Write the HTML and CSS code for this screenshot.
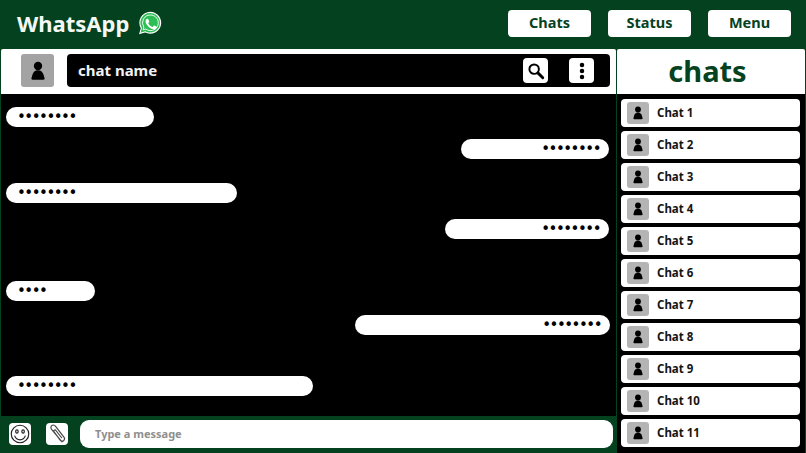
FILE: index.html
```html
<!DOCTYPE html>
<html lang="en">
<head>
<meta charset="utf-8">
<title>WhatsApp</title>
<link rel="stylesheet" href="styles.css">
</head>
<body>
<svg class="defs" width="0" height="0" aria-hidden="true">
  <symbol id="person" viewBox="0 0 24 24">
    <circle cx="12" cy="6" r="5"/>
    <path d="M12 11c-3.600 0-5.800 2.300-6.600 5.200L4.200 20.500c-.4 1.200.2 2 1.300 2h13c1.100 0 1.700-.8 1.300-2l-1.200-4.300C17.800 13.300 15.600 11 12 11z"/>
  </symbol>
</svg>
<header class="topbar">
  <div class="brand">
    <span class="brand-name">WhatsApp</span>
    <svg class="brand-logo" viewBox="0 0 24 24">
      <path class="logo-edge" d="M12.300 .8A11 11 0 0 0 2.800 17.300L1 23.200l6.200-1.600A11 11 0 1 0 12.300 .8z"/>
      <path class="logo-fill" d="M12.300 2A9.800 9.800 0 0 0 3.900 17l-1.300 4.500 4.700-1.200A9.800 9.800 0 1 0 12.300 2z"/>
      <path class="logo-ring" d="M12.300 4a7.800 7.800 0 0 0-6.500 12.100l-.7 2.600 2.700-.7A7.800 7.800 0 1 0 12.300 4z"/>
      <path class="logo-phone" d="M9.500 7.700c-.3 0-.7.100-1 .5-.4.400-1 1-1 2.400s1 2.700 1.200 2.900c.2.200 2 3.100 4.800 4.200 2.300.9 2.800.7 3.400.7.500-.1 1.600-.7 1.800-1.300.2-.6.200-1.200.2-1.300-.1-.1-.3-.2-.6-.3l-1.900-.9c-.3-.1-.5-.2-.7.100l-.9 1.100c-.2.200-.3.200-.6.100-.3-.2-1.200-.5-2.300-1.400-.9-.8-1.400-1.700-1.600-2-.2-.3 0-.5.100-.6l.8-1c.1-.2.1-.3 0-.5l-.9-2.100c-.2-.5-.5-.6-.7-.6z"/>
    </svg>
  </div>
  <nav class="nav">
    <a class="nav-btn">Chats</a>
    <a class="nav-btn">Status</a>
    <a class="nav-btn">Menu</a>
  </nav>
</header>
<main class="app">
  <section class="conversation">
    <div class="conv-head">
      <span class="avatar avatar-lg"><svg class="person"><use href="#person"/></svg></span>
      <div class="name-bar">
        <span class="chat-name">chat name</span>
        <span class="tool tool-search">
          <svg viewBox="0 0 24 24"><circle cx="9.500" cy="9.500" r="6.300" class="stroke"/><path d="M14.500 14.500L21 21" class="stroke thick"/></svg>
        </span>
        <span class="tool tool-more">
          <svg viewBox="0 0 24 24"><circle cx="12" cy="4" r="3"/><circle cx="12" cy="12" r="3"/><circle cx="12" cy="20" r="3"/></svg>
        </span>
      </div>
    </div>
    <div class="messages">
      <div class="msg in m1">••••••••</div>
      <div class="msg out m2">••••••••</div>
      <div class="msg in m3">••••••••</div>
      <div class="msg out m4">••••••••</div>
      <div class="msg in m5">••••</div>
      <div class="msg out m6">••••••••</div>
      <div class="msg in m7">••••••••</div>
    </div>
    <div class="composer">
      <span class="tool tool-emoji">
        <svg viewBox="0 0 24 24"><circle cx="12" cy="12" r="10.500" class="thin"/><ellipse cx="8.300" cy="9" rx="1.500" ry="2" class="thin"/><ellipse cx="15.700" cy="9" rx="1.500" ry="2" class="thin"/><path d="M5.500 14c1.300 3.500 3.800 5 6.500 5s5.200-1.500 6.500-5" class="thin"/></svg>
      </span>
      <span class="tool tool-clip">
        <svg viewBox="0 0 24 24"><path d="M18 21.500L5.500 6.500c-1.300-1.700-1-3.600.4-4.600 1.400-1 3.200-.7 4.400.9l10 13c1.100 1.500.8 3.200-.5 4.200-1.300 1-3 .8-4-.6L8.500 9.500c-.6-.8-.5-1.600.2-2.100.6-.5 1.400-.4 2 .4l6.800 8.700" class="thin clip"/></svg>
      </span>
      <div class="input">Type a message</div>
    </div>
  </section>
  <aside class="sidebar">
    <h2 class="side-title">chats</h2>
    <ul class="chat-list">
      <li class="chat-row"><span class="avatar"><svg class="person"><use href="#person"/></svg></span>Chat 1</li>
      <li class="chat-row"><span class="avatar"><svg class="person"><use href="#person"/></svg></span>Chat 2</li>
      <li class="chat-row"><span class="avatar"><svg class="person"><use href="#person"/></svg></span>Chat 3</li>
      <li class="chat-row"><span class="avatar"><svg class="person"><use href="#person"/></svg></span>Chat 4</li>
      <li class="chat-row"><span class="avatar"><svg class="person"><use href="#person"/></svg></span>Chat 5</li>
      <li class="chat-row"><span class="avatar"><svg class="person"><use href="#person"/></svg></span>Chat 6</li>
      <li class="chat-row"><span class="avatar"><svg class="person"><use href="#person"/></svg></span>Chat 7</li>
      <li class="chat-row"><span class="avatar"><svg class="person"><use href="#person"/></svg></span>Chat 8</li>
      <li class="chat-row"><span class="avatar"><svg class="person"><use href="#person"/></svg></span>Chat 9</li>
      <li class="chat-row"><span class="avatar"><svg class="person"><use href="#person"/></svg></span>Chat 10</li>
      <li class="chat-row"><span class="avatar"><svg class="person"><use href="#person"/></svg></span>Chat 11</li>
    </ul>
  </aside>
</main>
</body>
</html>
```
FILE: styles.css
```css
* { box-sizing: border-box; }
html, body { margin: 0; height: 453px; overflow: hidden; }
body {
  width: 806px;
  background: #04411e;
  font-family: "Noto Sans", "Open Sans", sans-serif;
  color: #000;
}
.defs { display: block; height: 0; }
.topbar {
  height: 49px;
  display: flex;
  align-items: center;
  justify-content: space-between;
  padding: 0 15px 3px 17px;
}
.brand { display: flex; align-items: center; gap: 9px; }
.brand-name { font-size: 22px; font-weight: 700; color: #f4f8f5; padding-bottom: 1px; }
.brand-logo { width: 24px; height: 24px; }
.logo-edge { fill: #fff; }
.logo-fill { fill: #2fbd55; }
.logo-ring { fill: #2fbd55; stroke: #fff; stroke-width: .9; }
.logo-phone { fill: #fff; }
.nav { display: flex; gap: 17px; }
.nav-btn {
  width: 83px;
  height: 27px;
  background: #fff;
  border-radius: 4px;
  display: flex;
  align-items: center;
  justify-content: center;
  padding-bottom: 2px;
  color: #05421f;
  font-size: 14.500px;
  font-weight: 700;
}
.app { display: flex; height: 404px; padding-left: 1px; }
.conversation { width: 615px; display: flex; flex-direction: column; }
.conv-head {
  height: 45px;
  background: #fff;
  border-radius: 2px 2px 0 0;
  display: flex;
  align-items: flex-start;
  gap: 13px;
  padding: 5px 6px 0 20px;
}
.avatar {
  width: 22px;
  height: 22px;
  flex: none;
  background: #b4b4b4;
  border-radius: 3px;
  display: flex;
  align-items: center;
  justify-content: center;
}
.avatar-lg { width: 33px; height: 33px; background: #a3a3a3; }
.person { width: 14px; height: 14px; fill: #000; }
.avatar-lg .person { width: 20px; height: 20px; }
.name-bar {
  flex: 1;
  height: 33px;
  background: #000;
  border-radius: 4px;
  display: flex;
  align-items: center;
  padding: 0 16px 0 11px;
}
.chat-name { flex: 1; color: #f2f2f2; font-size: 15px; font-weight: 700; padding-bottom: 2px; }
.tool {
  width: 25px;
  height: 25px;
  flex: none;
  background: #fff;
  border-radius: 4px;
  display: flex;
  align-items: center;
  justify-content: center;
}
.tool svg { width: 18px; height: 18px; }
.tool-search { margin-right: 21px; }
.tool-more svg { fill: #000; }
.stroke { fill: none; stroke: #000; stroke-width: 2.600; }
.thick { stroke-width: 3.800; stroke-linecap: round; }
.thin { fill: none; stroke: #222; stroke-width: 1.400; }
.clip { stroke: #444; stroke-linecap: round; }
.messages {
  height: 322px;
  background: #000;
  display: flex;
  flex-direction: column;
  padding: 13px 7px 0 5px;
}
.msg {
  height: 20px;
  background: #fff;
  border-radius: 10px;
  font-family: "DejaVu Sans", sans-serif;
  font-size: 15px;
  line-height: 20px;
  letter-spacing: -1.500px;
  padding: 0 9px 0 11px;
  flex: none;
}
.out { align-self: flex-end; text-align: right; }
.m1 { width: 148px; }
.m2 { width: 148px; margin-top: 12px; }
.m3 { width: 231px; margin-top: 24px; }
.m4 { width: 164px; margin-top: 16px; }
.m5 { width: 89px; margin-top: 42px; }
.m6 { width: 255px; margin-top: 14px; margin-right: -1px; }
.m7 { width: 307px; margin-top: 41px; }
.composer {
  flex: 1;
  display: flex;
  align-items: center;
  padding: 0 3px 1px 8px;
}
.composer .tool { width: 22px; height: 22px; }
.composer .tool svg { width: 20px; height: 20px; }
.tool-emoji { margin-right: 15px; }
.tool-clip { margin-right: 12px; }
.input {
  flex: 1;
  height: 28px;
  background: #fff;
  border-radius: 9px;
  display: flex;
  align-items: center;
  padding: 0 0 2px 15px;
  color: #8f8f8f;
  font-size: 11px;
  font-weight: 700;
}
.sidebar {
  width: 188px;
  margin-left: 1px;
  display: flex;
  flex-direction: column;
}
.side-title {
  height: 45px;
  margin: 0;
  padding-right: 7px;
  background: #fff;
  border-radius: 2px 2px 0 0;
  color: #05421f;
  font-size: 29px;
  font-weight: 700;
  line-height: 43px;
  text-align: center;
}
.chat-list {
  flex: 1;
  margin: 0;
  padding: 5px 5px 0 4px;
  list-style: none;
  background: #000;
  display: flex;
  flex-direction: column;
  gap: 4px;
}
.chat-row {
  height: 28px;
  background: #fff;
  border-radius: 4px;
  display: flex;
  align-items: center;
  gap: 8px;
  padding: 0 0 2px 6px;
  font-size: 11.500px;
  font-weight: 700;
  color: #151515;
}
.chat-row .avatar { margin-top: 2px; }
```
